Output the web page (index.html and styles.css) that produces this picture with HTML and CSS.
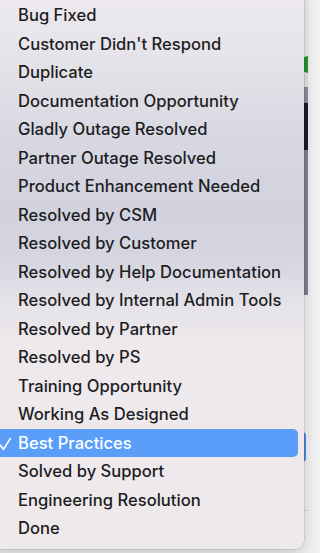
FILE: index.html
```html
<!DOCTYPE html>
<html>
<head>
<meta charset="utf-8">
<link rel="stylesheet" href="styles.css">
</head>
<body>
<div class="app">
  <div class="strip">
    <div class="seg seg-top"></div>
    <div class="seg seg-green"><span class="dot"></span></div>
    <div class="seg seg-light"></div>
    <div class="seg seg-mid"></div>
    <div class="seg seg-dark"></div>
    <div class="seg seg-gray"></div>
    <div class="seg seg-white">
      <span class="bracket"></span>
      <span class="rule"></span>
    </div>
  </div>
</div>
<ul class="menu">
  <li class="item">Bug Fixed</li>
  <li class="item">Customer Didn't Respond</li>
  <li class="item">Duplicate</li>
  <li class="item">Documentation Opportunity</li>
  <li class="item">Gladly Outage Resolved</li>
  <li class="item">Partner Outage Resolved</li>
  <li class="item">Product Enhancement Needed</li>
  <li class="item">Resolved by CSM</li>
  <li class="item">Resolved by Customer</li>
  <li class="item">Resolved by Help Documentation</li>
  <li class="item">Resolved by Internal Admin Tools</li>
  <li class="item">Resolved by Partner</li>
  <li class="item">Resolved by PS</li>
  <li class="item">Training Opportunity</li>
  <li class="item">Working As Designed</li>
  <li class="item selected"><svg class="check" width="13" height="14" viewBox="0 0 13 14"><path d="M1.2 8 L4.6 12.4 L11.2 1.6" fill="none" stroke="#fff" stroke-width="1.7" stroke-linecap="round" stroke-linejoin="round"/></svg>Best Practices</li>
  <li class="item">Solved by Support</li>
  <li class="item">Engineering Resolution</li>
  <li class="item">Done</li>
</ul>
</body>
</html>
```
FILE: styles.css
```css
html, body {
  margin: 0;
  padding: 0;
  width: 308px;
  height: 553px;
  overflow: hidden;
  background: #f2f2f3;
}
.app {
  height: 553px;
  display: flex;
  justify-content: flex-end;
}
.strip {
  width: 4px;
  display: flex;
  flex-direction: column;
}
.seg { position: relative; }
.seg-top { height: 56px; background: #ececee; }
.seg-green { height: 17px; background: #ececee; }
.dot {
  position: absolute;
  left: -4px;
  top: 0;
  width: 17px;
  height: 17px;
  border-radius: 50%;
  background: #27962f;
}
.seg-light { height: 14px; background: #e2e3e6; }
.seg-mid { height: 16px; background: #8a8f99; }
.seg-dark { height: 47px; background: #1a1f2e; }
.seg-gray { height: 145px; background: #7f8490; }
.seg-white { flex: 1; background: #f3f3f4; }
.bracket {
  position: absolute;
  left: -2px;
  top: 137px;
  width: 4px;
  height: 30px;
  border: 2px solid #4a8ef0;
  border-radius: 0 5px 5px 0;
  box-sizing: border-box;
}
.rule {
  position: absolute;
  left: 0;
  right: 0;
  top: 215px;
  height: 1px;
  background: #d8d8da;
}
.menu {
  position: absolute;
  left: -12px;
  top: -14px;
  width: 316px;
  height: 563px;
  margin: 0;
  padding: 15px 6px 0 6px;
  box-sizing: border-box;
  list-style: none;
  border-radius: 9px;
  background: linear-gradient(180deg,
    #eeeaee 0%,
    #e6e4ea 12%,
    #d8d8e2 27%,
    #d1d2de 40%,
    #d6d6e1 49%,
    #e6e3e9 57%,
    #ede9ec 64%,
    #eeeaec 100%);
  box-shadow: 0 0 0 0.5px rgba(0,0,0,0.18), 0 6px 18px rgba(0,0,0,0.18);
  font-family: Inter, "Noto Sans", sans-serif;
  font-size: 16.6px;
  font-weight: 450;
  color: #1d1d1f;
}
.item {
  height: 28.5px;
  line-height: 28.5px;
  padding-left: 24px;
  border-radius: 5px;
  white-space: nowrap;
  position: relative;
}
.item.selected {
  background: #5a9ef9;
  color: #ffffff;
}
.check {
  position: absolute;
  left: 5px;
  top: 8px;
}
```
